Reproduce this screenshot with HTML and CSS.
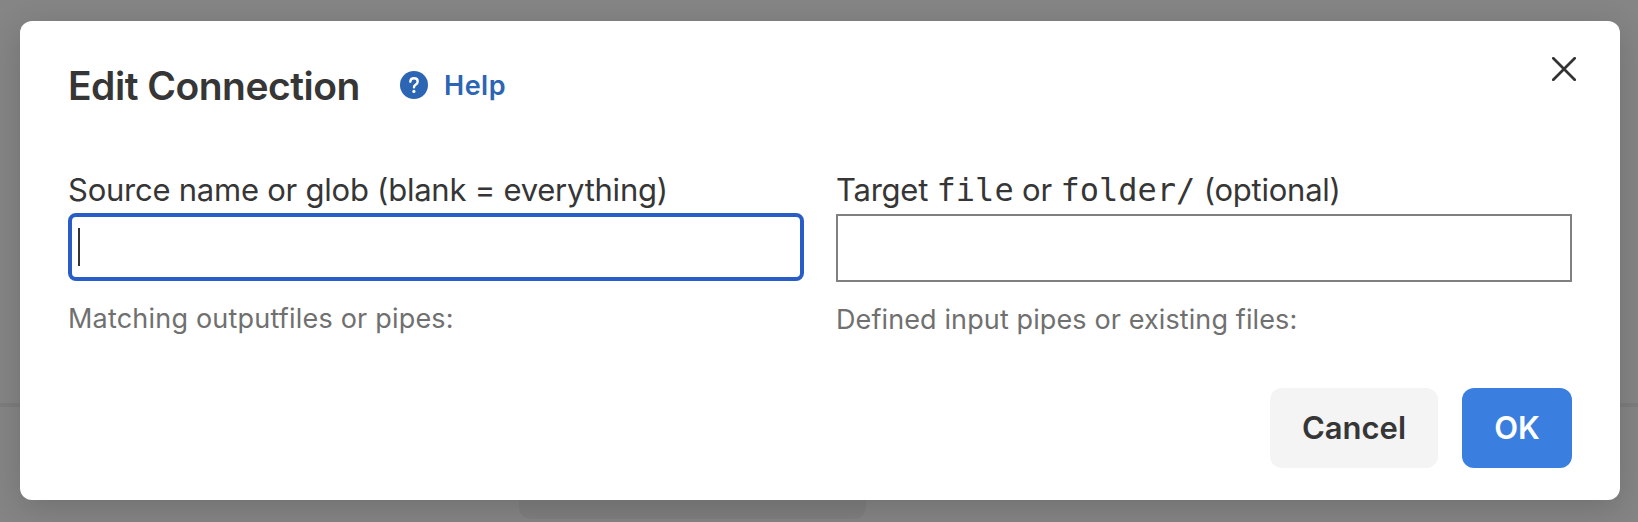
FILE: index.html
```
<!DOCTYPE html>
<html lang="en">
<head>
<meta charset="utf-8">
<title>Edit Connection</title>
<link rel="stylesheet" href="styles.css">
</head>
<body>
<div class="page-rule"></div>
<div class="page-card"></div>
<main class="dialog" role="dialog" aria-labelledby="title">
  <header class="header">
    <h1 class="title" id="title">Edit Connection</h1>
    <a class="help">
      <svg class="help-icon" viewBox="0 0 28 28" width="28" height="28"><circle cx="14" cy="14" r="14" fill="#2c65b3"/><path d="M10.3 10.7C10.5 8.5 12 7.3 14 7.3c2.2 0 3.7 1.3 3.7 3.2 0 1.5-.8 2.4-2.1 3.2-1.1.7-1.6 1.3-1.6 2.6" fill="none" stroke="#fff" stroke-width="2.4" stroke-linecap="round"/><circle cx="13.9" cy="20.4" r="1.6" fill="#fff"/></svg>
      <span class="help-text">Help</span>
    </a>
    <button class="close" aria-label="Close">
      <svg viewBox="0 0 24 24" width="24" height="24"><path d="M1.3 1.3 22.7 22.7M22.7 1.3 1.3 22.7" stroke="#333" stroke-width="2.7" stroke-linecap="round"/></svg>
    </button>
  </header>
  <section class="fields">
    <div class="field">
      <label class="label">Source name or glob (blank = everything)</label>
      <div class="input focused"><span class="caret"></span></div>
      <p class="hint">Matching outputfiles or pipes:</p>
    </div>
    <div class="field target">
      <label class="label">Target <code>file</code> or <code>folder/</code> (optional)</label>
      <div class="input"></div>
      <p class="hint">Defined input pipes or existing files:</p>
    </div>
  </section>
  <footer class="actions">
    <button class="button">Cancel</button>
    <button class="button primary">OK</button>
  </footer>
</main>
</body>
</html>
```
FILE: styles.css
```
* { box-sizing: border-box; }
body {
  margin: 0;
  height: 522px;
  padding: 21px 18px 22px 20px;
  position: relative;
  overflow: hidden;
  background: #858585;
  color: #363636;
  font-family: Inter, "Liberation Sans", sans-serif;
}
/* page content dimmed behind the dialog */
.page-rule { position: absolute; left: 0; right: 0; top: 403px; height: 4px; background: #7d7d7d; }
.page-card { position: absolute; left: 519px; top: 440px; width: 347px; height: 79px; border-radius: 12px; background: #7f7f7f; }
.dialog {
  position: relative;
  height: 479px;
  padding: 0 48px;
  border-radius: 12px;
  background: #fff;
  box-shadow: 0 8px 32px rgba(0, 0, 0, .16);
}
.header { display: flex; height: 128px; }
.title {
  width: 332px;
  margin: 0;
  padding-top: 41px;
  font-size: 39px;
  line-height: 48px;
  font-weight: 600;
  letter-spacing: -.5px;
  white-space: nowrap;
}
.help {
  display: flex;
  align-items: center;
  gap: 16px;
  height: 34px;
  margin-top: 47px;
  color: #2c65b3;
  font-size: 27px;
  line-height: 34px;
  font-weight: 600;
  letter-spacing: .5px;
}
.help-text { padding-top: 2px; }
.help-icon { display: block; }
.close {
  width: 24px;
  height: 24px;
  margin: 36px -4px 0 auto;
  padding: 0;
  border: 0;
  background: none;
}
.close svg { display: block; }
.fields { display: grid; grid-template-columns: 1fr 1fr; column-gap: 32px; height: 239px; padding-top: 20px; }
.label {
  display: block;
  height: 44px;
  font-size: 31px;
  line-height: 42px;
  letter-spacing: -.24px;
  white-space: nowrap;
}
.label code { font-family: "DejaVu Sans Mono", monospace; font-size: 32px; line-height: 1; letter-spacing: 0; }
.target .label { height: 45px; }
.input { height: 68px; border: 2px solid #808080; background: #fff; }
.input.focused { padding: 11px 0 0 6px; border: 4px solid #285dc8; border-radius: 8px; }
.caret { display: block; width: 2px; height: 38px; background: #333; }
.hint {
  margin: 20px 0 0;
  font-size: 27px;
  line-height: 36px;
  letter-spacing: .2px;
  color: #707070;
}
.target .hint { letter-spacing: .11px; }
.actions { display: flex; justify-content: flex-end; gap: 24px; }
.button {
  width: 168px;
  height: 80px;
  padding: 0;
  border: 0;
  border-radius: 12px;
  background: #f4f4f4;
  color: #363636;
  font: 600 31px/80px Inter, "Liberation Sans", sans-serif;
}
.primary { width: 110px; background: #3a7fe0; color: #fff; }
```
